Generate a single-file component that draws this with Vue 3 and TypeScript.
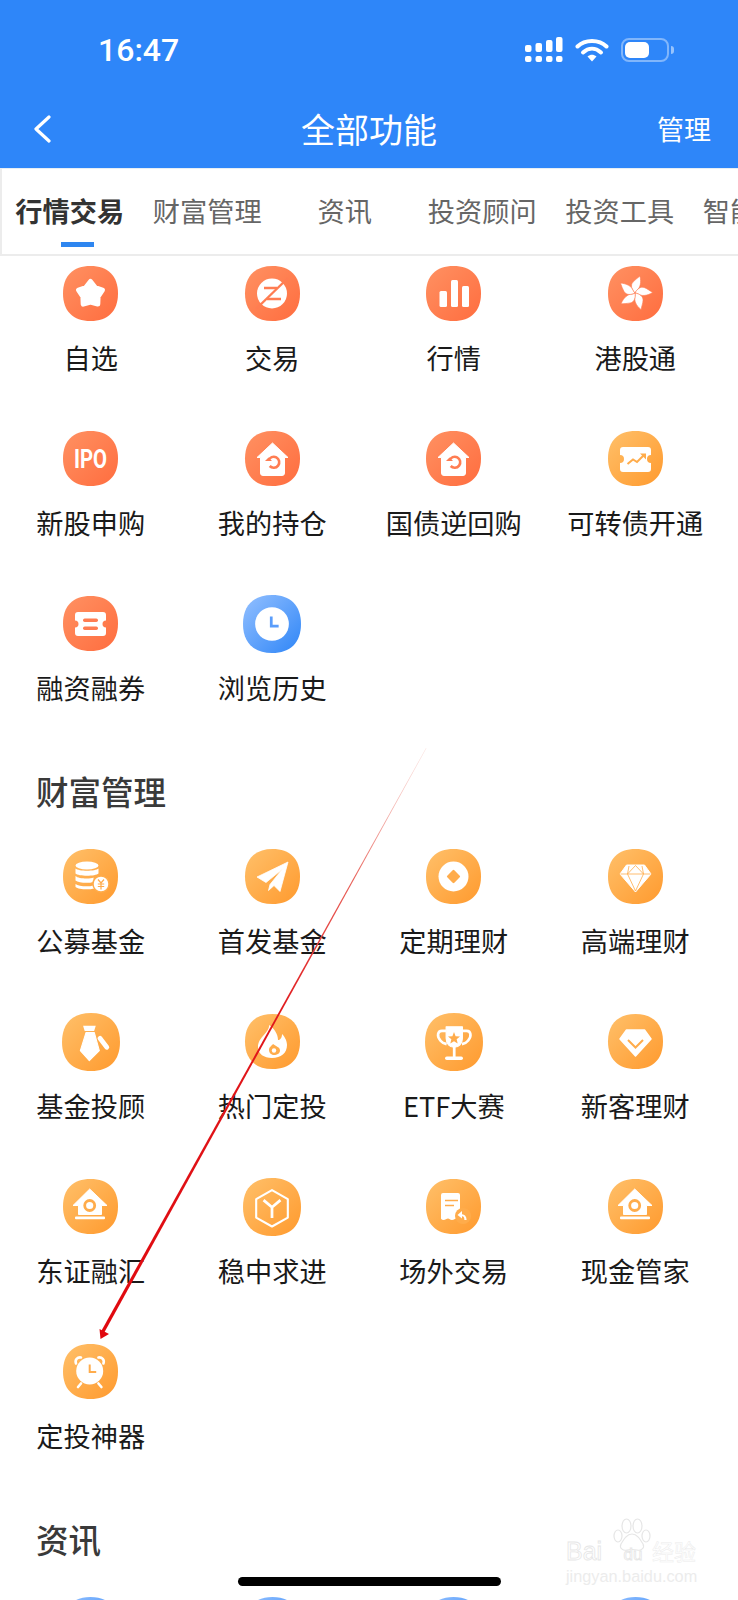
<script setup lang="ts">
type Tone = 'red' | 'orange' | 'blue'
interface Item {
  label: string
  tone: Tone
  big?: boolean
  glyph: string
}

const RED = '#ff7d52'
const ORG = '#ffac4b'
const BLU = '#5a9dfb'

const house = (c: string) => `
  <path d="M26.700 10 44 26.500h-5.500v9H15.500v-9H10z" fill="#fff" stroke="#fff" stroke-width="1" stroke-linejoin="round"/>
  <rect x="12" y="37.500" width="30" height="2.800" rx="1" fill="#fff"/>
  <circle cx="26.700" cy="26.500" r="5" fill="#fff" stroke="${c}" stroke-width="2.800"/>`

const returnHouse = `
  <path d="M27.500 12 43 26.500h-3.500V42a2.500 2.500 0 0 1-2.500 2.500H18a2.500 2.500 0 0 1-2.500-2.500V26.500H12z" fill="#fff" stroke="#fff" stroke-width="1" stroke-linejoin="round"/>
  <path d="M23.500 29.500a5.500 5.500 0 1 1 1.200 5.500" fill="none" stroke="${RED}" stroke-width="2.600"/>
  <path d="M20 30h7l-3.500-3.500z" fill="${RED}"/>`

// five separate petals, the thin stroke keeps a gap between them
const petals = [8, 80, 152, 224, 296]
  .map(a => `<path transform="translate(27 27) rotate(${a})" d="M0 0C-3.500-2.500-6-7-3.500-10.500C-2-13 .5-15 2.500-17.500C5-11.500 4.500-6 1.500-2.800C.8-1.800 .3-1 0 0Z" fill="#fff" stroke="${RED}" stroke-width=".6"/>`)
  .join('')

const groups: { title?: string; items: Item[] }[] = [
  {
    items: [
      { label: '自选', tone: 'red', glyph: `<polygon points="27.500,15.500 32.200,21.500 39.400,24.100 35.100,30.500 34.800,38.100 27.500,36 20.200,38.100 19.900,30.500 15.600,24.100 22.800,21.500" fill="#fff" stroke="#fff" stroke-width="5" stroke-linejoin="round"/>` },
      { label: '交易', tone: 'red', glyph: `<circle cx="27" cy="27.500" r="15" fill="#fff"/><path d="M43 12 11 43" stroke="${RED}" stroke-width="2.400"/><path d="M19 22H32M22 33H36" fill="none" stroke="${RED}" stroke-width="2.400"/>` },
      { label: '行情', tone: 'red', glyph: `<rect x="13.500" y="25" width="7.500" height="16" rx="1.500" fill="#fff"/><rect x="25" y="14" width="7" height="27" rx="1.500" fill="#fff"/><rect x="36" y="20" width="7" height="21" rx="1.500" fill="#fff"/>` },
      { label: '港股通', tone: 'red', glyph: petals },
      { label: '新股申购', tone: 'red', glyph: `<text x="27.500" y="36.500" text-anchor="middle" font-family="Roboto, sans-serif" font-weight="700" font-size="25" textLength="33" lengthAdjust="spacingAndGlyphs" fill="#fff">IPO</text>` },
      { label: '我的持仓', tone: 'red', glyph: returnHouse },
      { label: '国债逆回购', tone: 'red', glyph: returnHouse },
      { label: '可转债开通', tone: 'orange', glyph: `<path d="M15 16H40a3 3 0 0 1 3 3v5a4 4 0 0 0 0 8v6a3 3 0 0 1-3 3H15a3 3 0 0 1-3-3v-6a4 4 0 0 0 0-8v-5a3 3 0 0 1 3-3Z" fill="#fff"/><path d="M19.500 33 25 28.500l4 2.500 6.500-6.500" fill="none" stroke="${ORG}" stroke-width="2"/><path d="M32 22.500h6v6z" fill="${ORG}"/>` },
      { label: '融资融券', tone: 'red', glyph: `<path d="M15 16H40a3 3 0 0 1 3 3v5.500a3.500 3.500 0 0 0 0 7v5.500a3 3 0 0 1-3 3H15a3 3 0 0 1-3-3v-5.500a3.500 3.500 0 0 0 0-7v-5.500a3 3 0 0 1 3-3Z" fill="#fff"/><rect x="20" y="22.500" width="15" height="3.400" rx="1.700" fill="${RED}"/><rect x="20" y="30.500" width="15" height="3.400" rx="1.700" fill="${RED}"/>` },
      { label: '浏览历史', tone: 'blue', big: true, glyph: `<circle cx="27.500" cy="27.500" r="16" fill="#fff"/><path d="M26.800 20.500v9h7" fill="none" stroke="${BLU}" stroke-width="2.600"/>` }
    ]
  },
  {
    title: '财富管理',
    items: [
      { label: '公募基金', tone: 'orange', glyph: `<ellipse cx="24" cy="16.500" rx="11.500" ry="4" fill="#fff"/><path d="M12.500 19.500c3 3 20 3 23 0v5c-3 3-20 3-23 0zM12.500 27c3 3 15 3 18 1.500v4.500c-5 1.500-15 1-18-1.500zM12.500 35c3 2.500 13 3 18 1.500l1 3c-6 1.500-16 1-19-1.500z" fill="#fff"/><circle cx="38" cy="35" r="8" fill="#fff" stroke="${ORG}" stroke-width="1.500"/><path d="M35 30.500l3 3.500 3-3.500M34.800 35h6.400M34.800 37.500h6.400M38 34v6.500" fill="none" stroke="${ORG}" stroke-width="1.200"/>` },
      { label: '首发基金', tone: 'orange', glyph: `<path d="M43 13 12 28l9 5.500L37.500 20 25 35.500l-1.500 6 5.500-5 6 6z" fill="#fff" stroke="#fff" stroke-width=".8" stroke-linejoin="round"/>` },
      { label: '定期理财', tone: 'orange', glyph: `<circle cx="27.500" cy="27.500" r="15" fill="#fff"/><rect x="22.500" y="22.500" width="10" height="10" rx="1.200" transform="rotate(45 27.500 27.500)" fill="${ORG}"/>` },
      { label: '高端理财', tone: 'orange', glyph: `<path d="M18.500 16h18L43 25 27.500 43 12 25z" fill="#fff" stroke="#fff" stroke-linejoin="round"/><path d="M12.500 25h30M21 17l-1.500 8 8 17 8-17-1.500-8M19.500 25l8-8.500 8 8.500" fill="none" stroke="${ORG}" stroke-width=".8"/>` },
      { label: '基金投顾', tone: 'orange', big: true, glyph: `<path d="M20 12h12l-1.500 5h-9z" fill="#fff"/><path d="M22.800 18.500h7.800l4.800 17.200-9.500 9.500-8.500-9.500z" fill="#fff" stroke="#fff" stroke-linejoin="round"/><path d="M36 24l6.500 8.500" stroke="#fff" stroke-width="4.500" stroke-linecap="round"/>` },
      { label: '热门定投', tone: 'orange', glyph: `<path d="M24 11C25 18 13 23 13 33 13 40 19 44 27 44 36 44 42 39 42 31 42 26 39 22 37 20 37 24 35 26 33 26 33 20 29 14 24 11Z" fill="#fff"/><path d="M28 30C31 32.500 35 33 35 36.500 35 39.500 32 41 29 41 26 41 24 38.500 24 36 24 33 26.500 32 28 30Z" fill="${ORG}"/><circle cx="29" cy="36.500" r="2.200" fill="#fff"/>` },
      { label: 'ETF大赛', tone: 'orange', big: true, glyph: `<path d="M20 13h15.500v11c0 5-3.500 8.500-7.800 8.500S20 29 20 24z" fill="#fff" stroke="#fff" stroke-linejoin="round"/><path d="M20 17h-4c-4 0-5 5-1.500 9 1.500 2 4 3 6 3.500M35.500 17h4c4 0 5 5 1.500 9-1.500 2-4 3-6 3.500" fill="none" stroke="#fff" stroke-width="2.500"/><rect x="26.400" y="32" width="2.600" height="10" fill="#fff"/><rect x="19" y="41.300" width="17" height="3.200" rx="1.600" fill="#fff"/><polygon points="27.500,18 29,22 33.200,22.200 30,24.800 31,29 27.500,26.700 24,29 25,24.800 21.800,22.200 26,22" fill="${ORG}"/>` },
      { label: '新客理财', tone: 'orange', glyph: `<path d="M18.500 16h18L43 25 27.500 42 12 25z" fill="#fff" stroke="#fff" stroke-width="1.500" stroke-linejoin="round"/><path d="M20 26l7.500 7.500L35 26" fill="none" stroke="${ORG}" stroke-width="2"/>` },
      { label: '东证融汇', tone: 'orange', glyph: house(ORG) },
      { label: '稳中求进', tone: 'orange', big: true, glyph: `<path d="M27.500 11.500 42.500 20v17.500L27.500 46 12.500 37.500V20z" fill="none" stroke="#fff" stroke-width="2" stroke-linejoin="round"/><path d="M19.500 21l8 6.800 8-6.800M27.500 27.800V38" fill="none" stroke="#fff" stroke-width="2.600"/>` },
      { label: '场外交易', tone: 'orange', glyph: `<path d="M17 14h15a2 2 0 0 1 2 2v25c-1.500 0-2-1.500-3.500-1.500S28 41 26 41s-2.500-1.500-4-1.500S19.500 41 17.500 41 15 39.500 15 39.500V16a2 2 0 0 1 2-2z" fill="#fff"/><path d="M19 21.500h13M19 26.500h9" stroke="${ORG}" stroke-width="1.700"/><circle cx="37" cy="37" r="8" fill="${ORG}"/><path d="M39.500 41c0-4-1.500-5-5-5" fill="none" stroke="#fff" stroke-width="2.200"/><path d="M36 32l-4.500 4 4.500 3.500z" fill="#fff"/>` },
      { label: '现金管家', tone: 'orange', glyph: house(ORG) },
      { label: '定投神器', tone: 'orange', glyph: `<circle cx="26.700" cy="27" r="13.500" fill="#fff"/><path d="M13 19.500c-1.500-4 1.500-6.500 5-6M40.400 19.500c1.500-4-1.500-6.500-5-6" fill="none" stroke="#fff" stroke-width="2.600" stroke-linecap="round"/><path d="M18 39.500l-3 3.500M35.400 39.500l3 3.500" stroke="#fff" stroke-width="2.600" stroke-linecap="round"/><path d="M26.700 20.500v7.500h6.500" fill="none" stroke="${ORG}" stroke-width="2"/>` }
    ]
  },
  {
    title: '资讯',
    items: [
      { label: '', tone: 'blue', glyph: '' },
      { label: '', tone: 'blue', glyph: '' },
      { label: '', tone: 'blue', glyph: '' },
      { label: '', tone: 'blue', glyph: '' }
    ]
  }
]

const tabs = ['行情交易', '财富管理', '资讯', '投资顾问', '投资工具', '智能投顾']
const signalBars = [
  { x: 0, y: 8, h: 7 },
  { x: 10.500, y: 6, h: 9 },
  { x: 21, y: 3, h: 12 },
  { x: 31, y: 0, h: 15 }
]
</script>

<template>
  <div class="page">
    <svg class="defs" width="0" height="0">
      <defs>
        <linearGradient id="tone-red" x1="0" y1="0" x2="1" y2="1">
          <stop offset="0" stop-color="#ff9162" />
          <stop offset="1" stop-color="#ff6d3f" />
        </linearGradient>
        <linearGradient id="tone-orange" x1="0" y1="0" x2="1" y2="1">
          <stop offset="0" stop-color="#ffc06a" />
          <stop offset="1" stop-color="#ff9a2e" />
        </linearGradient>
        <linearGradient id="tone-blue" x1="0" y1="0" x2="1" y2="1">
          <stop offset="0" stop-color="#93c0ff" />
          <stop offset="1" stop-color="#2f86f7" />
        </linearGradient>
      </defs>
    </svg>

    <header class="header">
      <div class="status">
        <span class="time">16:47</span>
        <div class="status-icons">
          <svg width="38" height="25" viewBox="0 0 38 25" class="signal">
            <g v-for="bar in signalBars" :key="bar.x" fill="#fff">
              <rect :x="bar.x" :y="bar.y" width="6.500" :height="bar.h" rx="2" />
              <rect :x="bar.x" y="19" width="6.500" height="6" rx="2" />
            </g>
          </svg>
          <svg width="34" height="24" viewBox="0 0 34 24" class="wifi">
            <path d="M2.500 8.500C10 1 24 1 31.500 8.500" fill="none" stroke="#fff" stroke-width="4" stroke-linecap="round" />
            <path d="M8 14.500c5.500-5 12.500-5 18 0" fill="none" stroke="#fff" stroke-width="4" stroke-linecap="round" />
            <path d="M12.500 18.500c3-2.500 6-2.500 9 0L17 23.500z" fill="#fff" />
          </svg>
          <div class="battery">
            <div class="battery-fill"></div>
          </div>
          <div class="battery-nub"></div>
        </div>
      </div>
      <div class="nav">
        <svg class="back" width="18" height="28" viewBox="0 0 18 28">
          <path d="M16 2 3 14l13 12" fill="none" stroke="#fff" stroke-width="3.200" stroke-linecap="round" stroke-linejoin="round" />
        </svg>
        <span class="title">全部功能</span>
        <span class="manage">管理</span>
      </div>
    </header>

    <div class="tabs">
      <div v-for="(tab, i) in tabs" :key="tab" class="tab" :class="{ active: i === 0 }">{{ tab }}</div>
    </div>

    <main class="list">
      <section v-for="(group, g) in groups" :key="g">
        <h2 v-if="group.title" class="section-title">{{ group.title }}</h2>
        <div class="grid">
          <div v-for="(item, i) in group.items" :key="i" class="item">
            <div class="icon">
              <svg :width="item.big ? 58 : 55" :height="item.big ? 58 : 55" viewBox="0 0 55 55" class="icon-svg">
                <path
                  d="M27.500 0C45 0 55 10 55 27.500S45 55 27.500 55 0 45 0 27.500 10 0 27.500 0Z"
                  :fill="`url(#tone-${item.tone})`"
                />
                <g v-html="item.glyph"></g>
              </svg>
            </div>
            <div class="label">{{ item.label }}</div>
          </div>
        </div>
      </section>
    </main>

    <svg class="arrow" width="738" height="1600" viewBox="0 0 738 1600">
      <defs>
        <linearGradient id="arrow-fade" gradientUnits="userSpaceOnUse" x1="426" y1="748" x2="101" y2="1338">
          <stop offset="0" stop-color="#f2b0a8" stop-opacity="0.4" />
          <stop offset="0.22" stop-color="#e8625a" />
          <stop offset="0.45" stop-color="#e0181c" />
          <stop offset="1" stop-color="#e0080e" />
        </linearGradient>
      </defs>
      <polygon points="426,748 426.400,748.200 104,1333 101,1331.400" fill="url(#arrow-fade)" />
      <polygon points="100.500,1339 99.500,1329 109,1334" fill="#e0080e" />
    </svg>

    <div class="watermark">
      <svg class="paw" width="42" height="34" viewBox="0 0 42 34">
        <g fill="none" stroke="#e6e6e6" stroke-width="1.200">
          <ellipse cx="7" cy="18" rx="4" ry="6" />
          <ellipse cx="15.500" cy="8" rx="4.500" ry="7" />
          <ellipse cx="26.500" cy="8" rx="4.500" ry="7" />
          <ellipse cx="35" cy="18" rx="4" ry="6" />
          <path d="M21 16c5 0 8 5 11 10 2 4-2 7-6 6-3-.6-7-.6-10 0-4 1-8-2-6-6 3-5 6-10 11-10z" />
        </g>
      </svg>
      <div class="mark-row">
        <span class="mark-bai">Bai</span>
        <span class="mark-du">du</span>
        <span class="mark-jy">经验</span>
      </div>
      <div class="mark-url">jingyan.baidu.com</div>
    </div>

    <div class="home-bar"></div>
  </div>
</template>

<style scoped>
.page {
  position: relative;
  width: 738px;
  height: 1600px;
  overflow: hidden;
  background: #fff;
  font-family: "Noto Sans CJK SC", "Liberation Sans", sans-serif;
}
.defs {
  display: block;
  height: 0;
}
.header {
  height: 168px;
  background: #2e86f9;
  color: #fff;
}
.status {
  height: 97px;
  display: flex;
  align-items: center;
  justify-content: space-between;
  padding: 2px 64px 0 98px;
  box-sizing: border-box;
}
.time {
  font-family: Roboto, "Liberation Sans", sans-serif;
  font-size: 32px;
  font-weight: 500;
}
.status-icons {
  display: flex;
  align-items: center;
}
.wifi {
  margin-left: 12px;
}
.battery {
  width: 48px;
  height: 24px;
  margin-left: 12px;
  box-sizing: border-box;
  border: 2px solid rgba(255, 255, 255, 0.4);
  border-radius: 8px;
  padding: 2px;
}
.battery-fill {
  width: 24px;
  height: 16px;
  background: #fff;
  border-radius: 5px;
}
.battery-nub {
  width: 3px;
  height: 8px;
  margin-left: 2px;
  background: rgba(255, 255, 255, 0.5);
  border-radius: 0 3px 3px 0;
}
.nav {
  height: 71px;
  display: flex;
  align-items: center;
  justify-content: space-between;
  padding: 0 27px 7px 33px;
  box-sizing: border-box;
  position: relative;
}
.title {
  position: absolute;
  left: 0;
  right: 0;
  text-align: center;
  font-size: 34px;
  line-height: 48px;
}
.manage {
  font-size: 27px;
  line-height: 40px;
}
.tabs {
  height: 88px;
  box-sizing: border-box;
  display: flex;
  overflow: hidden;
  border-left: 2px solid #ececec;
  border-top: 1px solid #e6eef5;
  border-bottom: 2px solid #ececec;
}
.tab {
  flex: 0 0 137.5px;
  text-align: center;
  white-space: nowrap;
  font-size: 27.2px;
  line-height: 83px;
  color: #666;
  position: relative;
  left: -1px;
}
.tab.active {
  font-weight: 700;
  color: #333;
}
.tab.active::after {
  content: "";
  position: absolute;
  left: 60px;
  top: 73px;
  width: 33px;
  height: 5px;
  background: #2e86f0;
}
.list {
  padding-top: 10px;
}
.section-title {
  margin: 0 0 24px;
  padding-left: 36px;
  font-size: 32.5px;
  font-weight: 500;
  color: #3a3a3a;
  line-height: 60px;
  height: 64px;
}
.grid {
  display: grid;
  grid-template-columns: repeat(4, 181.5px);
}
.item {
  height: 165px;
  text-align: center;
}
.icon {
  height: 55px;
  display: flex;
  align-items: center;
  justify-content: center;
}
.icon-svg {
  flex: none;
  overflow: visible;
}
.label {
  margin-top: 20px;
  font-size: 27.2px;
  line-height: 32px;
  color: #1a1a1a;
  white-space: nowrap;
}
.arrow {
  position: absolute;
  left: 0;
  top: 0;
  pointer-events: none;
}
.watermark {
  position: absolute;
  left: 566px;
  top: 1518px;
  width: 134px;
  height: 66px;
  color: #fff;
}
.paw {
  position: absolute;
  left: 45px;
  top: 0;
}
.mark-row {
  position: absolute;
  left: 0;
  top: 18px;
  display: flex;
  align-items: baseline;
  font-family: "Liberation Sans", sans-serif;
  -webkit-text-stroke: 0.8px #e6e6e6;
  line-height: 28px;
}
.mark-bai {
  width: 48px;
  font-size: 25px;
}
.mark-du {
  width: 38px;
  font-size: 17px;
  text-align: center;
}
.mark-jy {
  font-size: 22px;
  font-family: "Noto Sans CJK SC", sans-serif;
  -webkit-text-stroke: 0.5px #ececec;
}
.mark-url {
  position: absolute;
  left: 0;
  top: 50px;
  font-family: "Liberation Sans", sans-serif;
  font-size: 16.3px;
  line-height: 16px;
  color: #ececec;
  white-space: nowrap;
}
.home-bar {
  position: absolute;
  left: 238px;
  top: 1577px;
  width: 263px;
  height: 9px;
  border-radius: 5px;
  background: #000;
}
</style>
